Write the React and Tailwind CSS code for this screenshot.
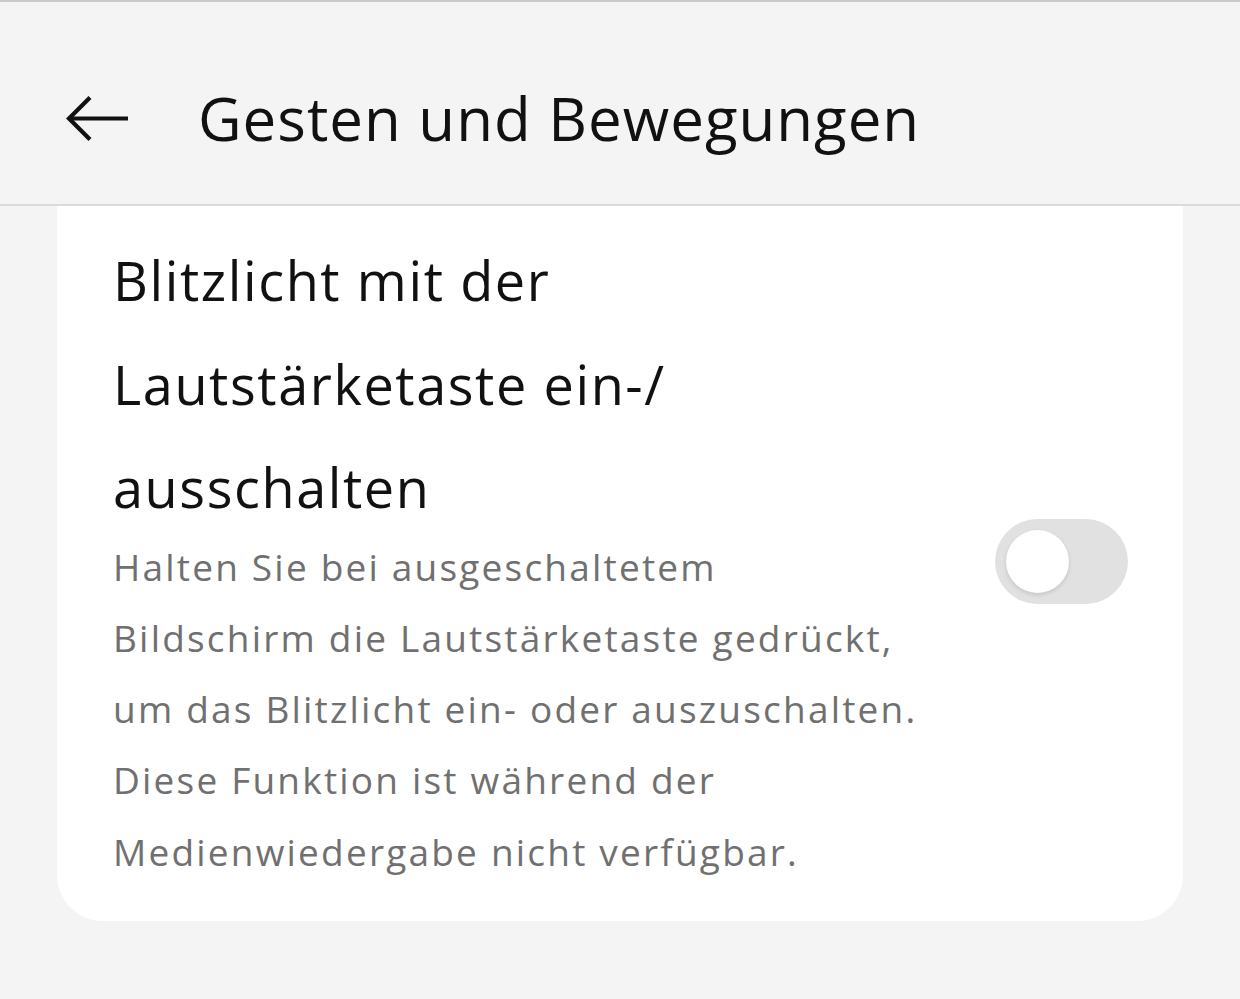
import React from "react";

export default function App() {
  return (
    <div className="w-[1240px] h-[999px] bg-[#f4f4f4] overflow-hidden flex flex-col" style={{ fontFamily: '"Open Sans", "Noto Sans", sans-serif' }}>
      <div className="h-[2px] bg-[#c9c9c9]" />
      <header className="h-[204px] flex items-center border-b-2 border-[#dadada] shrink-0 pt-[32px]">
        <div className="w-[198px] pl-[66px] flex items-center">
          <svg width="64" height="48" viewBox="0 0 64 48" fill="none" stroke="#111" strokeWidth="4.2" strokeLinecap="butt" strokeLinejoin="miter">
            <path d="M62 23.5H4" />
            <path d="M24 2.5L3 23.5L24 44.5" />
          </svg>
        </div>
        <h1 className="text-[60px] leading-none text-[#111] font-normal tracking-[1px] mt-[-2px]">Gesten und Bewegungen</h1>
      </header>
      <div className="mx-[57px] bg-white rounded-b-[46px] pl-[56px] pr-[55px] pt-[23px] pb-[34px] flex items-center">
        <div className="flex-1">
          <div className="text-[54px] leading-[103.5px] text-[#111] tracking-[1.6px]">
            Blitzlicht mit der<br />Lautstärketaste ein-/<br />ausschalten
          </div>
          <div className="mt-[-9px] text-[37px] leading-[71.3px] text-[#707070] tracking-[2.2px]">
            Halten Sie bei ausgeschaltetem<br />Bildschirm die Lautstärketaste gedrückt,<br />um das Blitzlicht ein- oder auszuschalten.<br />Diese Funktion ist während der<br />Medienwiedergabe nicht verfügbar.
          </div>
        </div>
        <div className="w-[133px] h-[85px] rounded-full bg-[#e1e1e1] flex items-center pl-[11px] shrink-0 mt-[8px]">
          <div className="w-[63px] h-[63px] rounded-full bg-white shadow-[0_2px_4px_rgba(0,0,0,0.12)]" />
        </div>
      </div>
    </div>
  );
}
